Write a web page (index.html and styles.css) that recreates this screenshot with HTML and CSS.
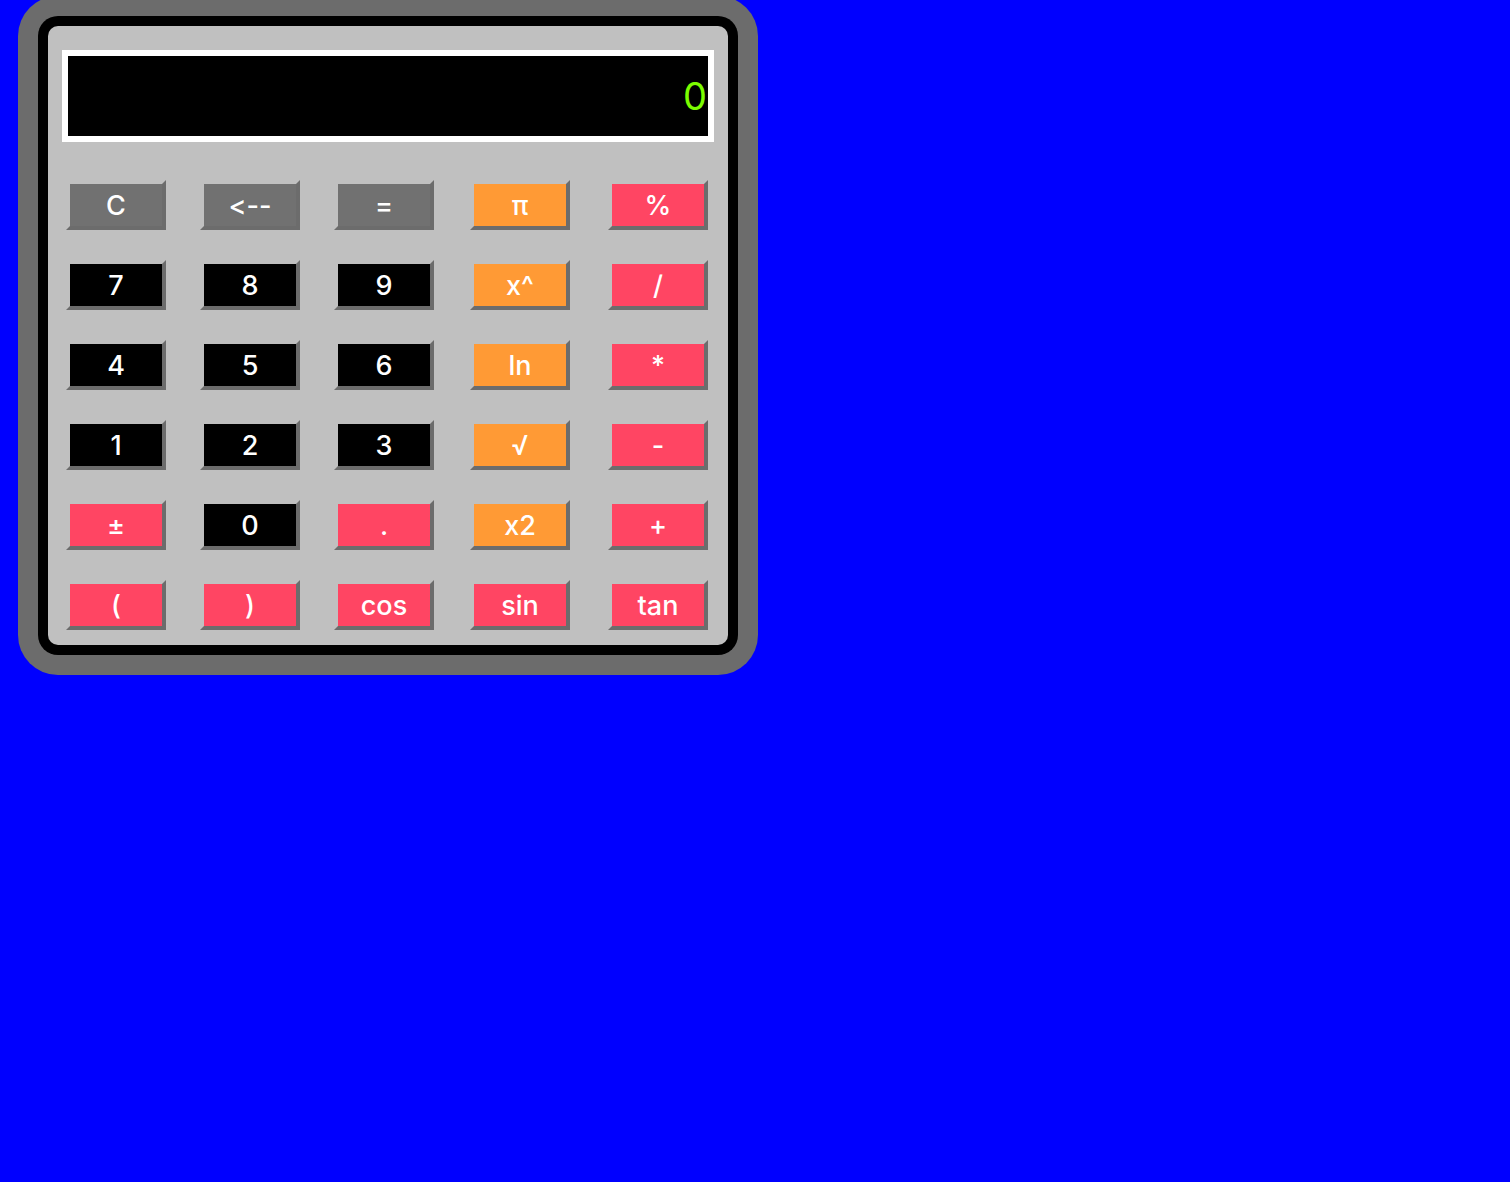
FILE: index.html
```html
<!DOCTYPE html>
<html>
<head>
<meta charset="utf-8">
<title>Calculator</title>
<link rel="stylesheet" href="styles.css">
</head>
<body>
<div class="calc">
  <div class="ring">
    <div class="panel">
      <div class="display">0</div>
      <div class="keys">
        <button class="key grey">C</button>
        <button class="key grey">&lt;--</button>
        <button class="key grey">=</button>
        <button class="key orange">π</button>
        <button class="key pink">%</button>

        <button class="key black">7</button>
        <button class="key black">8</button>
        <button class="key black">9</button>
        <button class="key orange">x^</button>
        <button class="key pink">/</button>

        <button class="key black">4</button>
        <button class="key black">5</button>
        <button class="key black">6</button>
        <button class="key orange">ln</button>
        <button class="key pink">*</button>

        <button class="key black">1</button>
        <button class="key black">2</button>
        <button class="key black">3</button>
        <button class="key orange">√</button>
        <button class="key pink">-</button>

        <button class="key pink">±</button>
        <button class="key black">0</button>
        <button class="key pink">.</button>
        <button class="key orange">x2</button>
        <button class="key pink">+</button>

        <button class="key pink">(</button>
        <button class="key pink">)</button>
        <button class="key pink">cos</button>
        <button class="key pink">sin</button>
        <button class="key pink">tan</button>
      </div>
    </div>
  </div>
</div>
</body>
</html>
```

FILE: styles.css
```css
html, body {
  margin: 0;
  padding: 0;
}

body {
  background: #0000ff;
  font-family: Inter, "Liberation Sans", Arial, sans-serif;
  min-height: 1182px;
}

.calc {
  width: 740px;
  box-sizing: border-box;
  margin: -4px 0 0 18px;
  padding: 20px;
  background: #6c6c6c;
  border-radius: 40px;
}

.ring {
  background: #000;
  padding: 10px;
  border-radius: 20px;
}

.panel {
  background: #c0c0c0;
  border-radius: 10px;
  padding: 24px 20px 15px 18px;
}

.display {
  box-sizing: border-box;
  width: 652px;
  height: 92px;
  margin-left: -4px;
  border: 6px solid #fff;
  background: #000;
  color: #7cfc00;
  font-family: Inter, "Liberation Sans", Arial, sans-serif;
  font-size: 38px;
  line-height: 80px;
  text-align: right;
  padding-right: 1px;
}

.keys {
  margin-top: 38px;
  display: grid;
  grid-template-columns: 134px 134px 136px 138px 100px;
  grid-auto-rows: 50px;
  row-gap: 30px;
}

.key {
  box-sizing: border-box;
  width: 100px;
  height: 50px;
  margin: 0;
  padding: 1px 0 0;
  border: 4px solid;
  border-color: transparent #6c6c6c #6c6c6c transparent;
  background-clip: padding-box;
  color: #fff;
  font-family: Inter, "Liberation Sans", Arial, sans-serif;
  font-size: 27px;
  font-weight: 500;
  font-variant-ligatures: none;
  font-feature-settings: "calt" 0, "liga" 0;
  line-height: 40px;
  text-align: center;
  cursor: pointer;
}

.grey { background-color: #717171; }
.black { background-color: #000; }
.orange { background-color: #ff9a35; }
.pink { background-color: #ff4563; }
```
